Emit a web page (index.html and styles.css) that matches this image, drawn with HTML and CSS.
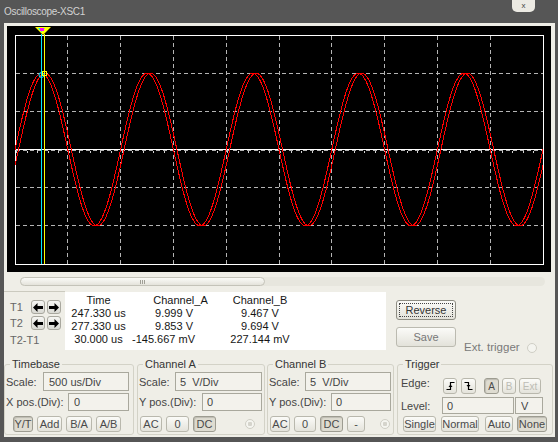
FILE: index.html
```html
<!DOCTYPE html>
<html lang="en">
<head>
	<meta charset="utf-8">
	<title>Oscilloscope-XSC1</title>
	<link rel="stylesheet" href="styles.css">
</head>
<body>

	<div class="window">
		<div class="titlebar">
			<span class="title">Oscilloscope-XSC1</span>
			<span class="close">x</span>
		</div>

		<div class="frame">
			<svg class="screen" width="544" height="246" viewBox="0 0 544 246">
				<rect width="544" height="246" fill="#000"/>
				<g stroke="#b4b4b4" stroke-dasharray="4 3" shape-rendering="crispEdges">
					<line x1="60.5" y1="10" x2="60.5" y2="238"/>
					<line x1="113.5" y1="10" x2="113.5" y2="238"/>
					<line x1="166.5" y1="10" x2="166.5" y2="238"/>
					<line x1="219.5" y1="10" x2="219.5" y2="238"/>
					<line x1="272.5" y1="10" x2="272.5" y2="238"/>
					<line x1="324.5" y1="10" x2="324.5" y2="238"/>
					<line x1="377.5" y1="10" x2="377.5" y2="238"/>
					<line x1="430.5" y1="10" x2="430.5" y2="238"/>
					<line x1="483.5" y1="10" x2="483.5" y2="238"/>
					<line x1="9" y1="47.5" x2="536" y2="47.5"/>
					<line x1="9" y1="85.5" x2="536" y2="85.5"/>
					<line x1="9" y1="124.5" x2="536" y2="124.5"/>
					<line x1="9" y1="161.5" x2="536" y2="161.5"/>
					<line x1="9" y1="199.5" x2="536" y2="199.5"/>
				</g>
				<!-- ticks on the centre axis -->
				<line x1="9" y1="126" x2="536" y2="126" stroke="#d0d0d0" stroke-width="2" stroke-dasharray="1 9.56" shape-rendering="crispEdges"/>
				<line x1="9" y1="123.5" x2="536" y2="123.5" stroke="#fff" shape-rendering="crispEdges"/>
				<rect x="8.5" y="9.5" width="528" height="229" fill="none" stroke="#fff" shape-rendering="crispEdges"/>

				<polyline class="wave wave-a" points=""/>
				<polyline class="wave wave-b" points=""/>

				<!-- cursors -->
				<line x1="34.5" y1="8" x2="34.5" y2="238" stroke="#00e5ff" shape-rendering="crispEdges"/>
				<line x1="37.5" y1="8" x2="37.5" y2="238" stroke="#ffff00" shape-rendering="crispEdges"/>
				<polygon points="28,1 44,1 36,9" fill="#ffff00"/>
				<polygon points="31,2 38,2 34.5,6" fill="#00e5ff"/>
				<rect x="33" y="2" width="4" height="3" fill="#ff00ff"/>
				<circle cx="34.5" cy="49" r="2.5" fill="none" stroke="#00e5ff"/>
				<rect x="35.5" y="45.5" width="4" height="4" fill="none" stroke="#ffff00"/>
			</svg>

			<div class="scroll">
				<div class="track">
					<div class="thumb"><span class="grip"></span></div>
				</div>
			</div>

			<div class="readout">
				<div class="cursors">
					<span class="tlabel">T1</span>
					<span class="arrow"><svg width="10" height="9" viewBox="0 0 10 9"><polygon points="0,4.5 4.5,0 4.5,3 10,3 10,6 4.5,6 4.5,9"/></svg></span>
					<span class="arrow"><svg width="10" height="9" viewBox="0 0 10 9"><polygon points="10,4.5 5.5,0 5.5,3 0,3 0,6 5.5,6 5.5,9"/></svg></span>
					<span class="tlabel">T2</span>
					<span class="arrow"><svg width="10" height="9" viewBox="0 0 10 9"><polygon points="0,4.5 4.5,0 4.5,3 10,3 10,6 4.5,6 4.5,9"/></svg></span>
					<span class="arrow"><svg width="10" height="9" viewBox="0 0 10 9"><polygon points="10,4.5 5.5,0 5.5,3 0,3 0,6 5.5,6 5.5,9"/></svg></span>
					<span class="tlabel diff">T2-T1</span>
				</div>

				<div class="table">
					<span>Time</span>
					<span>Channel_A</span>
					<span>Channel_B</span>
					<span>247.330 us</span>
					<span class="val-a">9.999 V</span>
					<span>9.467 V</span>
					<span>277.330 us</span>
					<span class="val-a">9.853 V</span>
					<span>9.694 V</span>
					<span>30.000 us</span>
					<span class="val-a">-145.667 mV</span>
					<span>227.144 mV</span>
				</div>

				<div class="actions">
					<button class="big reverse">Reverse</button>
					<div class="save-row">
						<button class="big save">Save</button>
						<span class="ext">Ext. trigger</span>
						<span class="radio empty"></span>
					</div>
				</div>
			</div>

			<div class="groups">
				<fieldset class="group timebase">
					<legend>Timebase</legend>
					<div class="row">
						<span>Scale:</span>
						<input class="field w86" value="500 us/Div" readonly>
					</div>
					<div class="row second">
						<span>X pos.(Div):</span>
						<input class="field w61" value="0" readonly>
					</div>
					<div class="btnrow tb">
						<button class="btn on w20">Y/T</button>
						<button class="btn w25">Add</button>
						<button class="btn w26">B/A</button>
						<button class="btn w25">A/B</button>
					</div>
				</fieldset>

				<fieldset class="group chan-a">
					<legend>Channel A</legend>
					<div class="row">
						<span>Scale:</span>
						<input class="field w87" value="5  V/Div" readonly>
					</div>
					<div class="row second">
						<span>Y pos.(Div):</span>
						<input class="field w60" value="0" readonly>
					</div>
					<div class="btnrow ch">
						<button class="btn w22">AC</button>
						<button class="btn w23">0</button>
						<button class="btn on w23">DC</button>
						<span class="radio ra"></span>
					</div>
				</fieldset>

				<fieldset class="group chan-b">
					<legend>Channel B</legend>
					<div class="row">
						<span>Scale:</span>
						<input class="field w86" value="5  V/Div" readonly>
					</div>
					<div class="row second">
						<span>Y pos.(Div):</span>
						<input class="field w60" value="0" readonly>
					</div>
					<div class="btnrow ch">
						<button class="btn w20">AC</button>
						<button class="btn w22">0</button>
						<button class="btn on w23">DC</button>
						<button class="btn w18">-</button>
						<span class="radio rb"></span>
					</div>
				</fieldset>

				<fieldset class="group trigger">
					<legend>Trigger</legend>
					<div class="edge-row">
						<span class="edge-label">Edge:</span>
						<button class="btn edge w14">
							<svg width="9" height="10" viewBox="0 0 9 10"><path d="M0.5 8.5 H4.5 V1.5 H8.5" fill="none" stroke="#000" stroke-width="1.2"/><polygon points="2.5,6 4.5,3.5 6.5,6" fill="#000"/></svg>
						</button>
						<button class="btn edge w15 fall">
							<svg width="9" height="10" viewBox="0 0 9 10"><path d="M0.5 1.5 H4.5 V8.5 H8.5" fill="none" stroke="#000" stroke-width="1.2"/><polygon points="2.5,4 4.5,6.5 6.5,4" fill="#000"/></svg>
						</button>
						<button class="btn edge on w15 src-a">A</button>
						<button class="btn edge off w14 src-b">B</button>
						<button class="btn edge off w22 src-b">Ext</button>
					</div>
					<div class="level-row">
						<span class="level-label">Level:</span>
						<input class="field w72" value="0" readonly>
						<input class="field w28 unit" value="V" readonly>
					</div>
					<div class="mode-row">
						<button class="btn w33">Single</button>
						<button class="btn w38 m5">Normal</button>
						<button class="btn w28 m6">Auto</button>
						<button class="btn on w30 m4">None</button>
					</div>
				</fieldset>
			</div>
		</div>
	</div>

	<script>
		// two 1 kHz sines, 5 V/div, 500 us/div, channel B lags a little
		let wave = (shift) => {
			let pts = []
			for(let x = 8; x <= 536; x++){
				let y = 123.5 - 76.3 * Math.sin(2 * Math.PI * (x - 8 - shift) / 105.6)
				pts.push(x + ',' + y.toFixed(1))
			}
			return pts.join(' ')
		}
		document.querySelector('.wave-a').setAttribute('points', wave(0))
		document.querySelector('.wave-b').setAttribute('points', wave(3.5))
	</script>
</body>
</html>
```

FILE: styles.css
```css
*{
	margin: 0;
	padding: 0;
	box-sizing: border-box;
}

body{
	background: #565656;
	font-family: "Liberation Sans", Arial, sans-serif;
	font-size: 11px;
	color: #454545;
}

.window{
	width: 558px;
	height: 442px;
	background: #565656;
	padding: 0 3px 5px 4px;
	display: flex;
	flex-direction: column;
}

.titlebar{
	height: 23px;
	display: flex;
	align-items: flex-start;
}
.title{
	font-size: 10px;
	letter-spacing: -0.3px;
	line-height: 24px;
	color: #d2d2d2;
}
.close{
	margin-left: auto;
	margin-right: 20px;
	width: 23px;
	height: 12px;
	background: #eceae3;
	border-radius: 0 0 5px 5px;
	font-size: 8px;
	line-height: 11px;
	text-align: center;
	color: #444;
}

.frame{
	height: 414px;
	background: #efeee7;
	display: flex;
	flex-direction: column;
}

.screen{
	display: block;
	margin: 3px 4px 0 3px;
}
.wave{
	fill: none;
	stroke: #ff0000;
	stroke-width: 1;
	shape-rendering: crispEdges;
}

.scroll{
	height: 19px;
	padding: 5px 10px 0 16px;
}
.track{
	height: 9px;
	border-radius: 5px;
	background: #e7e6de;
}
.thumb{
	width: 245px;
	height: 9px;
	border: 1px solid #c4c3b9;
	border-radius: 5px;
	background: linear-gradient(#fbfbf8, #e4e3db);
	display: flex;
	justify-content: center;
	align-items: center;
}
.grip{
	width: 5px;
	height: 4px;
	background: repeating-linear-gradient(90deg, #a09f96 0 1px, transparent 1px 2px);
}

.readout{
	height: 61px;
	display: flex;
}
.cursors{
	width: 61px;
	border-top: 1px solid #cbcabf;
	padding: 8px 0 0 6px;
	display: grid;
	grid-template-columns: 21px 16px 14px;
	grid-auto-rows: 16px;
}
.tlabel{
	color: #666;
	line-height: 14px;
}
.tlabel.diff{
	grid-column: 1 / 4;
	line-height: 16px;
}
.arrow{
	width: 14px;
	height: 14px;
	border: 1px solid #a9a89f;
	border-radius: 3px;
	background: linear-gradient(#f6f6f3, #d9d9d3);
	display: flex;
	justify-content: center;
	align-items: center;
}

.table{
	width: 321px;
	height: 58px;
	margin-top: 1px;
	background: #fff;
	padding-top: 2px;
	display: grid;
	grid-template-columns: 67px 97px 62px;
	grid-auto-rows: 13px;
	line-height: 13px;
	text-align: center;
	color: #151515;
	white-space: nowrap;
}
.table .val-a{
	text-align: right;
	padding-right: 36px;
}

.actions{
	flex: 1;
	padding: 9px 0 0 10px;
}
.big{
	display: block;
	width: 60px;
	height: 20px;
	border: 1px solid #8e8d83;
	border-radius: 3px;
	background: linear-gradient(#fbfbf8, #e3e2da);
	font: inherit;
	color: #333;
}
.reverse{
	outline: 1px dotted #444;
	outline-offset: -4px;
}
.save-row{
	display: flex;
	align-items: flex-start;
	margin-top: 7px;
}
.save{
	border-color: #bbbab0;
	color: #777;
}
.ext{
	margin: 14px 0 0 8px;
	line-height: 13px;
	font-size: 11.5px;
	color: #7a7a7a;
}
.radio{
	width: 10px;
	height: 10px;
	border: 1px solid #cfcec5;
	border-radius: 50%;
	background: radial-gradient(#d5d4cc 0 2px, #f5f5f0 2.5px);
}
.radio.empty{
	background: #f4f4ef;
	margin: 16px 0 0 7px;
}

.groups{
	display: flex;
	padding-top: 6px;
}
.group{
	height: 77px;
	border: 1px solid #d3d2c7;
	border-radius: 3px;
	padding: 1px 2px 2px 1px;
}
.group legend{
	margin-left: 4px;
	padding: 0 2px;
	line-height: 13px;
	color: #353535;
}
.timebase{
	width: 130px;
	padding-right: 4px;
}
.chan-a{
	width: 128px;
	margin-left: 3px;
}
.chan-b{
	width: 127px;
	margin-left: 2px;
}
.trigger{
	width: 156px;
	margin-left: 3px;
}

.row{
	height: 19px;
	display: flex;
	justify-content: space-between;
	align-items: center;
}
.row.second{
	height: 18px;
	margin-top: 2px;
}

.field{
	height: 100%;
	border: 1px solid #a9a89d;
	background: #f3f2ec;
	font: inherit;
	color: #444;
	padding: 0 4px;
	white-space: pre;
}
.timebase .field{
	padding-left: 5px;
}

.btnrow{
	height: 16px;
	margin-top: 5px;
	display: flex;
	gap: 4px;
	align-items: center;
}
.btnrow.tb{
	padding-left: 7px;
}
.btnrow.ch{
	padding-left: 1px;
}

.btn{
	height: 16px;
	border: 1px solid #b9b8ad;
	border-radius: 3px;
	background: linear-gradient(#fbfbf8, #e4e3db);
	font: inherit;
	color: #4a4a4a;
	display: flex;
	justify-content: center;
	align-items: center;
}
.btn.on{
	background: #dedcd1;
	border-color: #9d9c91;
	box-shadow: inset 1px 1px 1px rgba(0, 0, 0, 0.15);
}
.btn.off{
	color: #bdbdb5;
}

.radio.ra{
	margin-left: 25px;
}
.radio.rb{
	margin-left: 11px;
}

.w14{ width: 14px; }
.w15{ width: 15px; }
.w18{ width: 18px; }
.w20{ width: 20px; }
.w22{ width: 22px; }
.w23{ width: 23px; }
.w25{ width: 25px; }
.w26{ width: 26px; }
.w28{ width: 28px; }
.w30{ width: 30px; }
.w33{ width: 33px; }
.w38{ width: 38px; }
.w60{ width: 60px; }
.w61{ width: 61px; }
.w72{ width: 72px; }
.w86{ width: 86px; }
.w87{ width: 87px; }

.edge-row{
	height: 23px;
	display: flex;
	align-items: flex-start;
}
.edge-label{
	width: 44px;
	line-height: 23px;
	padding-left: 2px;
}
.btn.edge{
	margin-top: 6px;
	font-size: 10px;
}
.btn.fall{
	margin-left: 4px;
}
.btn.src-a{
	margin-left: 8px;
}
.btn.src-b{
	margin-left: 3px;
}

.level-row{
	height: 17px;
	margin-top: 2px;
	display: flex;
	align-items: center;
}
.level-label{
	width: 43px;
	padding-left: 2px;
}
.field.unit{
	margin-left: 1px;
	padding-left: 5px;
}

.mode-row{
	height: 16px;
	margin-top: 2px;
	padding-left: 4px;
	display: flex;
}
.m4{ margin-left: 4px; }
.m5{ margin-left: 5px; }
.m6{ margin-left: 6px; }
```
